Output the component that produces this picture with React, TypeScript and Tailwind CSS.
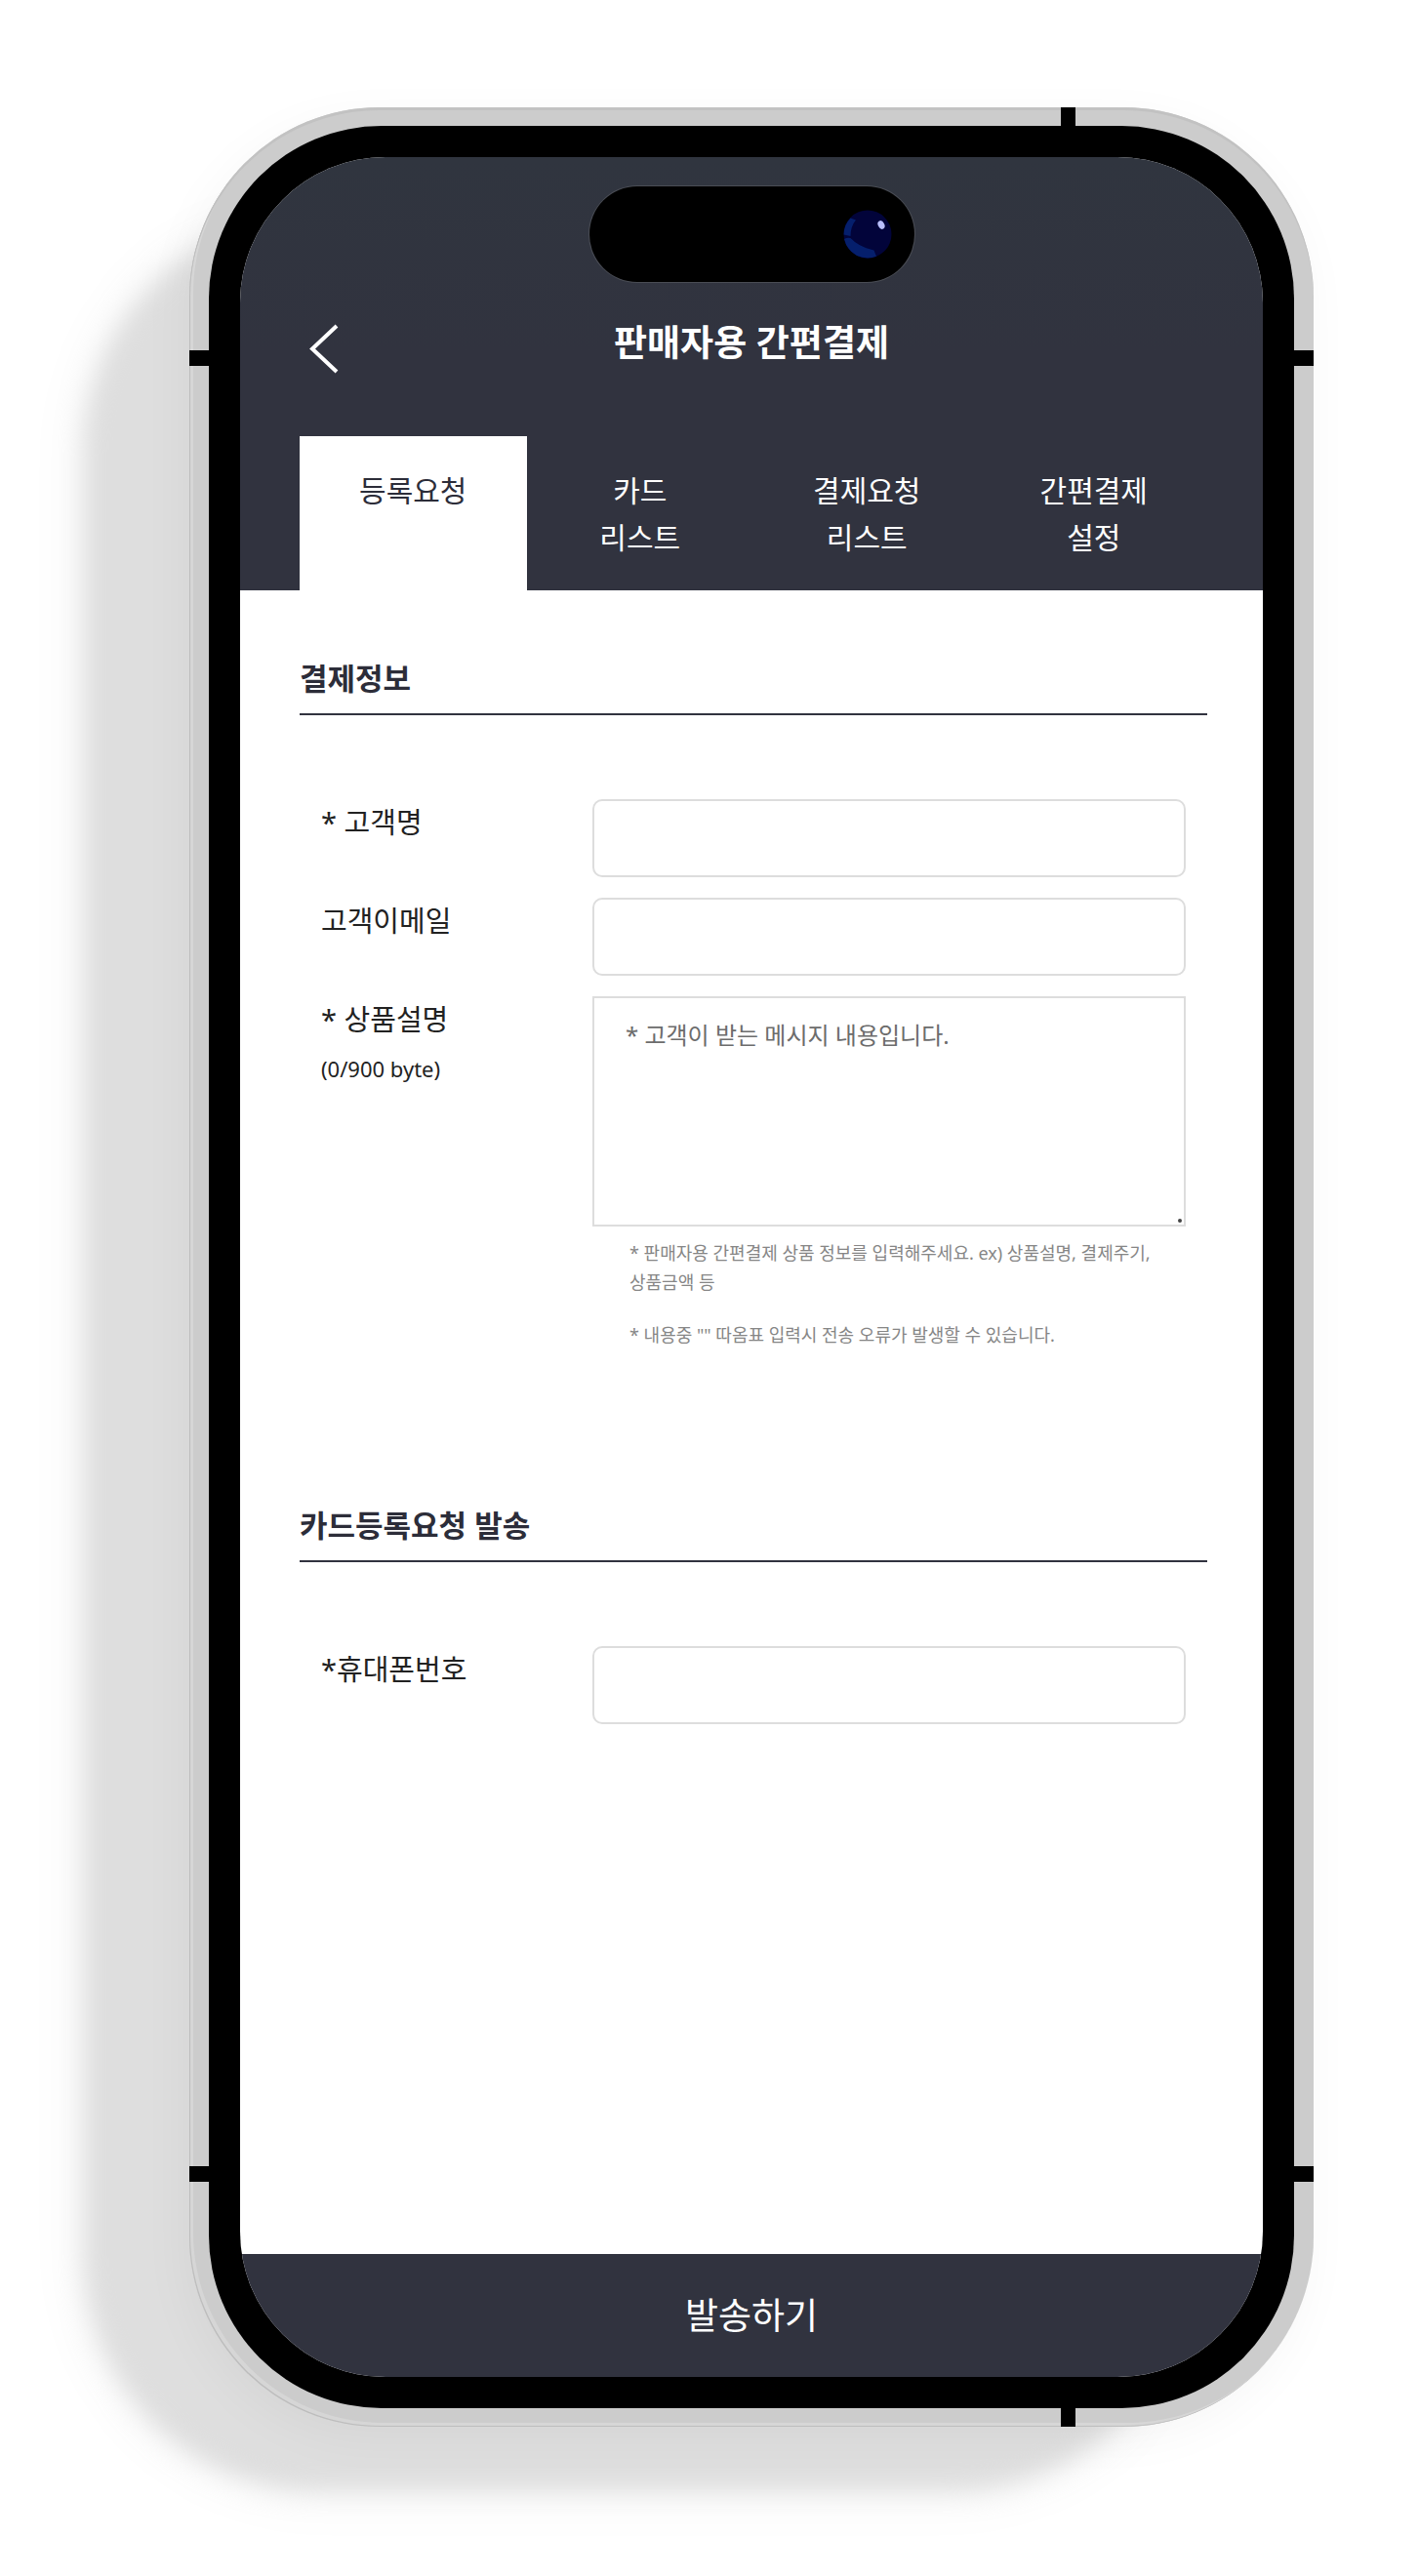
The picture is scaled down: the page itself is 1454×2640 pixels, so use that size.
import { useState } from "react";

const tabs = [
  ["등록요청"],
  ["카드", "리스트"],
  ["결제요청", "리스트"],
  ["간편결제", "설정"],
];

const inputClass =
  "block h-20 w-full rounded-[10px] border-2 border-[#dddddd] bg-white px-8 text-2xl text-[#222222] outline-none focus:border-[#31333f]";

function Camera() {
  return (
    <svg viewBox="0 0 50 50" className="size-[50px]" aria-hidden="true">
      <circle cx="25" cy="25" r="24.5" fill="#02043a" />
      <path d="M7.5 8.5 L13 10.5 Q7.5 17 7.5 27 L0.6 25.5 Q0.6 15.500 7.500 8.500Z" fill="#051f6c" />
      <path d="M1 30 Q4 28 7.500 29 Q16 38 31.500 41.500 L34 47.800 Q24 51.500 14 47 Q3.500 41 1 30Z" fill="#051f6c" />
      <ellipse cx="39" cy="15.500" rx="3.200" ry="4.500" fill="#b9bfff" transform="rotate(-28 39 15.5)" />
    </svg>
  );
}

function SectionTitle({ children }: { children: string }) {
  return (
    <h2 className="border-b-2 border-[#31333f] pb-3 text-[31px] font-bold leading-[48px] text-[#2c2d39]">
      {children}
    </h2>
  );
}

function Field({ id, label, type }: { id: string; label: string; type: string }) {
  return (
    <div className="grid grid-cols-[278px_1fr]">
      <label htmlFor={id} className="text-[29px] leading-[48px] text-[#222222]">
        {label}
      </label>
      <input id={id} type={type} className={inputClass} />
    </div>
  );
}

export default function App() {
  const [active, setActive] = useState(0);

  return (
    <main className="flex min-h-screen overflow-hidden bg-white pt-[110px] pr-[108px] pb-[153px] pl-[194px] font-['Noto_Sans','Noto_Sans_CJK_KR',sans-serif]">
      <div className="relative isolate flex flex-1">
        <div className="absolute top-[112px] right-[130px] bottom-[-66px] left-[-108px] -z-10 rounded-[240px] bg-[#dedede] shadow-[0_0_50px_6px_rgba(0,0,0,0.05)] blur-[12px]" />

        <div className="relative flex flex-1 rounded-[195px] bg-[#cccccc] px-5 py-[19px] shadow-[inset_1px_-1px_0_#bdbdbd,inset_0_3px_0_#c2c2c2,inset_4px_-4px_0_#d6d6d6,-6px_12px_50px_rgba(0,0,0,0.04)]">
          <span className="absolute top-[249px] left-0 h-4 w-5 bg-black" />
          <span className="absolute top-[249px] right-0 h-4 w-5 bg-black" />
          <span className="absolute bottom-[251px] left-0 h-4 w-5 bg-black" />
          <span className="absolute right-0 bottom-[251px] h-4 w-5 bg-black" />
          <span className="absolute top-0 right-[244px] h-5 w-[15px] bg-black" />
          <span className="absolute right-[244px] bottom-0 h-5 w-[15px] bg-black" />

          <div className="flex flex-1 rounded-[177px] bg-black p-8">
            <div className="flex flex-1 flex-col overflow-hidden rounded-[149px] bg-white">
              <header className="bg-linear-to-b from-[#30353f] to-[#31333f] to-45% pt-[30px]">
                <div className="mx-auto flex h-[98px] w-[333px] items-center justify-end rounded-full bg-black pr-[23px] ring-1 ring-[#4a4d55]">
                  <Camera />
                </div>
                <div className="mb-[34px] grid h-[124px] grid-cols-[1fr_auto_1fr] items-center">
                  <button type="button" aria-label="뒤로" className="ml-[68px] justify-self-start pt-3">
                    <svg viewBox="0 0 34 52" className="h-[52px] w-[34px]" fill="none" stroke="#ffffff" strokeWidth="4" aria-hidden="true">
                      <path d="M31 3 L6 26.500 L31 50" />
                    </svg>
                  </button>
                  <h1 className="text-[37px] font-bold leading-[56px] text-white">판매자용 간편결제</h1>
                </div>
                <div role="tablist" className="grid grid-cols-4 pr-[57px] pl-[61px]">
                  {tabs.map((lines, i) => (
                    <button
                      key={i}
                      type="button"
                      role="tab"
                      aria-selected={i === active}
                      onClick={() => setActive(i)}
                      className={
                        i === active
                          ? "flex h-[158px] flex-col items-center bg-white pt-8 text-3xl leading-[48px] text-[#2c2d39]"
                          : "flex h-[158px] flex-col items-center pt-8 text-3xl leading-[48px] text-white"
                      }
                    >
                      {lines.map((line) => (
                        <span key={line} className="leading-[48px]">{line}</span>
                      ))}
                    </button>
                  ))}
                </div>
              </header>

              <form className="flex flex-1 flex-col" onSubmit={(e) => e.preventDefault()}>
                <div className="flex-1 pt-[66px] pr-[57px] pb-16 pl-[61px]">
                  <section>
                    <SectionTitle>결제정보</SectionTitle>
                    <div className="mt-[86px] flex flex-col gap-[21px] px-[22px]">
                      <Field id="name" label="* 고객명" type="text" />
                      <Field id="email" label="고객이메일" type="email" />
                      <div className="grid grid-cols-[278px_1fr]">
                        <label htmlFor="desc" className="text-[29px] leading-[48px] text-[#222222]">
                          * 상품설명
                          <span className="block pt-0.5 text-[22px]">(0/900 byte)</span>
                        </label>
                        <div>
                          <div className="relative">
                            <textarea
                              id="desc"
                              placeholder="* 고객이 받는 메시지 내용입니다."
                              className="block h-[236px] w-full resize-none border-2 border-[#dddddd] bg-white px-8 py-5 text-2xl leading-9 text-[#222222] outline-none placeholder:text-[#6c6c6c]"
                            />
                            <span className="absolute right-1 bottom-1 size-1 rounded-full bg-[#444444]" />
                          </div>
                          <div className="mt-3 pr-5 pl-[38px] text-lg leading-[30px] break-keep text-[#868686]">
                            <p>* 판매자용 간편결제 상품 정보를 입력해주세요. ex) 상품설명, 결제주기, 상품금액 등</p>
                            <p className="mt-6">* 내용중 "" 따옴표 입력시 전송 오류가 발생할 수 있습니다.</p>
                          </div>
                        </div>
                      </div>
                    </div>
                  </section>

                  <section className="mt-[156px]">
                    <SectionTitle>카드등록요청 발송</SectionTitle>
                    <div className="mt-[86px] px-[22px]">
                      <Field id="phone" label="*휴대폰번호" type="tel" />
                    </div>
                  </section>
                </div>

                <button type="submit" className="h-[126px] bg-[#31333f] text-[37px] leading-[56px] text-white">
                  발송하기
                </button>
              </form>
            </div>
          </div>
        </div>
      </div>
    </main>
  );
}
